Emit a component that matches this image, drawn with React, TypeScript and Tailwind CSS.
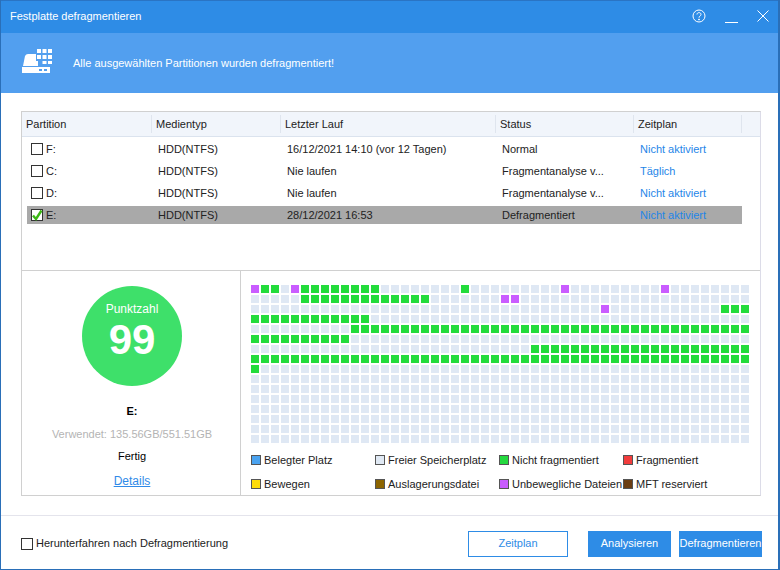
const FONT = "font-['Liberation_Sans',Arial,sans-serif]"

const rows = [
  { name: 'F:', last: '16/12/2021 14:10 (vor 12 Tagen)', status: 'Normal', plan: 'Nicht aktiviert' },
  { name: 'C:', last: 'Nie laufen', status: 'Fragmentanalyse v...', plan: 'Täglich' },
  { name: 'D:', last: 'Nie laufen', status: 'Fragmentanalyse v...', plan: 'Nicht aktiviert' },
  { name: 'E:', last: '28/12/2021 16:53', status: 'Defragmentiert', plan: 'Nicht aktiviert', checked: true },
]

const headers = [
  { label: 'Partition', w: 'w-[130px]' },
  { label: 'Medientyp', w: 'w-[129px]' },
  { label: 'Letzter Lauf', w: 'w-[215px]' },
  { label: 'Status', w: 'w-[138px]' },
  { label: 'Zeitplan', w: 'w-[108px]' },
]

const legend = [
  { label: 'Belegter Platz', color: 'bg-[#4aa3f0]' },
  { label: 'Freier Speicherplatz', color: 'bg-[#e0e9f4]' },
  { label: 'Nicht fragmentiert', color: 'bg-[#25d93f]' },
  { label: 'Fragmentiert', color: 'bg-[#f23c3c]' },
  { label: 'Bewegen', color: 'bg-[#ffdc0a]' },
  { label: 'Auslagerungsdatei', color: 'bg-[#8c6400]' },
  { label: 'Unbewegliche Dateien', color: 'bg-[#c95cff]' },
  { label: 'MFT reserviert', color: 'bg-[#6b3d12]' },
]

// block state per row: [from, to, kind]
const runs: Record<number, [number, number, string][]> = {
  0: [[0, 0, 'p'], [1, 2, 'g'], [4, 4, 'p'], [5, 12, 'g'], [21, 21, 'g'], [31, 31, 'p'], [41, 41, 'p']],
  1: [[5, 17, 'g'], [25, 26, 'p']],
  2: [[35, 35, 'p'], [47, 49, 'g']],
  3: [[0, 11, 'g']],
  4: [[10, 49, 'g']],
  5: [[0, 9, 'g']],
  6: [[28, 49, 'g']],
  7: [[0, 49, 'g']],
  8: [[0, 0, 'g']],
}

function blockColor(row: number, col: number) {
  const hit = (runs[row] ?? []).find(([a, b]) => col >= a && col <= b)
  if (!hit) return 'bg-[#dfe8f4]'
  return hit[2] === 'g' ? 'bg-[#23dc3c]' : 'bg-[#c95cff]'
}

function Checkbox({ checked }: { checked?: boolean }) {
  return (
    <span className="relative block w-[12px] h-[12px] border border-[#333] bg-white shrink-0">
      {checked && (
        <svg viewBox="0 0 12 12" className="absolute -left-px -top-px w-[12px] h-[12px]">
          <path d="M2 6.5 L5 10 L10.5 1.5" fill="none" stroke="#3cb815" strokeWidth="2.4" />
        </svg>
      )}
    </span>
  )
}

function DriveIcon() {
  return (
    <svg width="32" height="28" viewBox="0 0 32 28" fill="white" className="shrink-0">
      <path d="M1 17 L3 7 Q4 5 6 5 H14 V12 H16 V17 Z" />
      <rect x="0" y="18" width="28" height="6" />
      <rect x="17" y="20" width="3" height="2" fill="#529fef" />
      <rect x="22" y="20" width="3" height="2" fill="#529fef" />
      {[15, 20.5, 26].map((x) => (
        <rect key={x} x={x} y="0" width="4" height="4" />
      ))}
      {[15, 20.5, 26].map((x) => (
        <rect key={x} x={x} y="6" width="4" height="4" />
      ))}
      {[20.5, 26].map((x) => (
        <rect key={x} x={x} y="12" width="4" height="3" />
      ))}
    </svg>
  )
}

export default function App() {
  return (
    <div className={`${FONT} w-[780px] h-[570px] flex flex-col bg-white text-[11px] text-[#222] border-l border-r-2 border-b border-[#2a6fb8] overflow-hidden`}>
      {/* Title bar */}
      <div className="h-[33px] shrink-0 flex items-center justify-between bg-[#2e8ce6] pl-[9px] pr-[9px] pb-[2px] text-white border-t border-[#2a74c4]">
        <span className="text-[11px]">Festplatte defragmentieren</span>
        <div className="flex items-center gap-[19px]">
          <svg width="14" height="14" viewBox="0 0 14 14" fill="none" stroke="white">
            <circle cx="7" cy="7" r="6" />
            <path d="M5 5.5 C5 3 9 3 9 5.5 C9 7 7 7 7 8.7" />
            <circle cx="7" cy="10.5" r="0.5" fill="white" />
          </svg>
          <span className="block w-[13px] h-px bg-white mt-[12px]" />
          <svg width="12" height="12" viewBox="0 0 12 12" stroke="white">
            <path d="M0.5 0.5 L11.5 11.5 M11.5 0.5 L0.5 11.5" />
          </svg>
        </div>
      </div>

      {/* Banner */}
      <div className="h-[60px] shrink-0 flex items-center gap-[19px] pl-[21px] bg-[#529fef] text-white">
        <DriveIcon />
        <span>Alle ausgewählten Partitionen wurden defragmentiert!</span>
      </div>

      {/* Content */}
      <div className="pt-[18px] pl-[20px] pr-[17px]">
        <div className="h-[385px] flex flex-col border border-[#d0d0d0] border-r-[#dcdce8]">
          {/* Table */}
          <div className="h-[159px] shrink-0 flex flex-col border-b border-[#d0d0d0]">
            <div className="h-[25px] shrink-0 flex items-center bg-[#f1f5fb] border-b border-[#dbe3ee]">
              {headers.map((h) => (
                <div key={h.label} className={`${h.w} h-[18px] flex items-center pl-[4px] border-r border-[#dfe5ee]`}>
                  {h.label}
                </div>
              ))}
            </div>
            <div className="pt-[3px] pl-[5px]">
              {rows.map((r) => (
                <div key={r.name} className={`h-[18px] mb-[4px] w-[715px] flex items-center ${r.checked ? 'bg-[#a9a9a9]' : ''}`}>
                  <div className="w-[131px] flex items-center gap-[3px] pl-[4px]">
                    <Checkbox checked={r.checked} />
                    <span>{r.name}</span>
                  </div>
                  <div className="w-[129px]">HDD(NTFS)</div>
                  <div className="w-[215px]">{r.last}</div>
                  <div className="w-[138px]">{r.status}</div>
                  <div className="text-[#1f86e8]">{r.plan}</div>
                </div>
              ))}
            </div>
          </div>

          {/* Details */}
          <div className="flex-1 flex min-h-0">
            <div className="w-[219px] shrink-0 flex flex-col items-center border-r border-[#d0d0d0] pt-[15px] pl-[2px]">
              <div className="w-[100px] h-[100px] rounded-full bg-[#3ee06a] text-white flex flex-col items-center pt-[14px]">
                <span className="text-[12px] leading-[18px]">Punktzahl</span>
                <span className="text-[42px] leading-[44px] font-bold">99</span>
              </div>
              <div className="mt-[17px] font-bold text-black">E:</div>
              <div className="mt-[6px] text-[#b4b4b4]">Verwendet: 135.56GB/551.51GB</div>
              <div className="mt-[6px] text-black">Fertig</div>
              <div className="mt-[7px] text-[12px] text-[#2f8ae8] underline">Details</div>
            </div>
            <div className="flex-1 flex flex-col pl-[10px] pt-[14px]">
              <div className="grid grid-cols-[repeat(50,8px)] gap-[2px]">
                {Array.from({ length: 16 * 50 }, (_, i) => (
                  <span key={i} className={`h-[8px] ${blockColor(Math.floor(i / 50), i % 50)}`} />
                ))}
              </div>
              <div className="grid grid-cols-[124px_124px_124px_auto] gap-y-[8px] mt-[9px]">
                {legend.map((l) => (
                  <div key={l.label} className="h-[16px] flex items-center gap-[3px] whitespace-nowrap">
                    <span className={`w-[10px] h-[10px] border border-[#555] ${l.color}`} />
                    <span>{l.label}</span>
                  </div>
                ))}
              </div>
            </div>
          </div>
        </div>
      </div>

      {/* Footer */}
      <div className="mt-[19px] border-t border-[#e4e4ec] flex-1 flex items-center pt-[2px] pl-[20px] pr-[16px]">
        <Checkbox />
        <span className="ml-[3px]">Herunterfahren nach Defragmentierung</span>
        <div className="ml-auto flex gap-[8px]">
          <button className="w-[100px] h-[26px] border border-[#2e8ce6] text-[#2e8ce6] mr-[12px]">Zeitplan</button>
          <button className="w-[83px] h-[26px] bg-[#2e8ce6] text-white">Analysieren</button>
          <button className="w-[83px] h-[26px] bg-[#2e8ce6] text-white">Defragmentieren</button>
        </div>
      </div>
    </div>
  )
}
